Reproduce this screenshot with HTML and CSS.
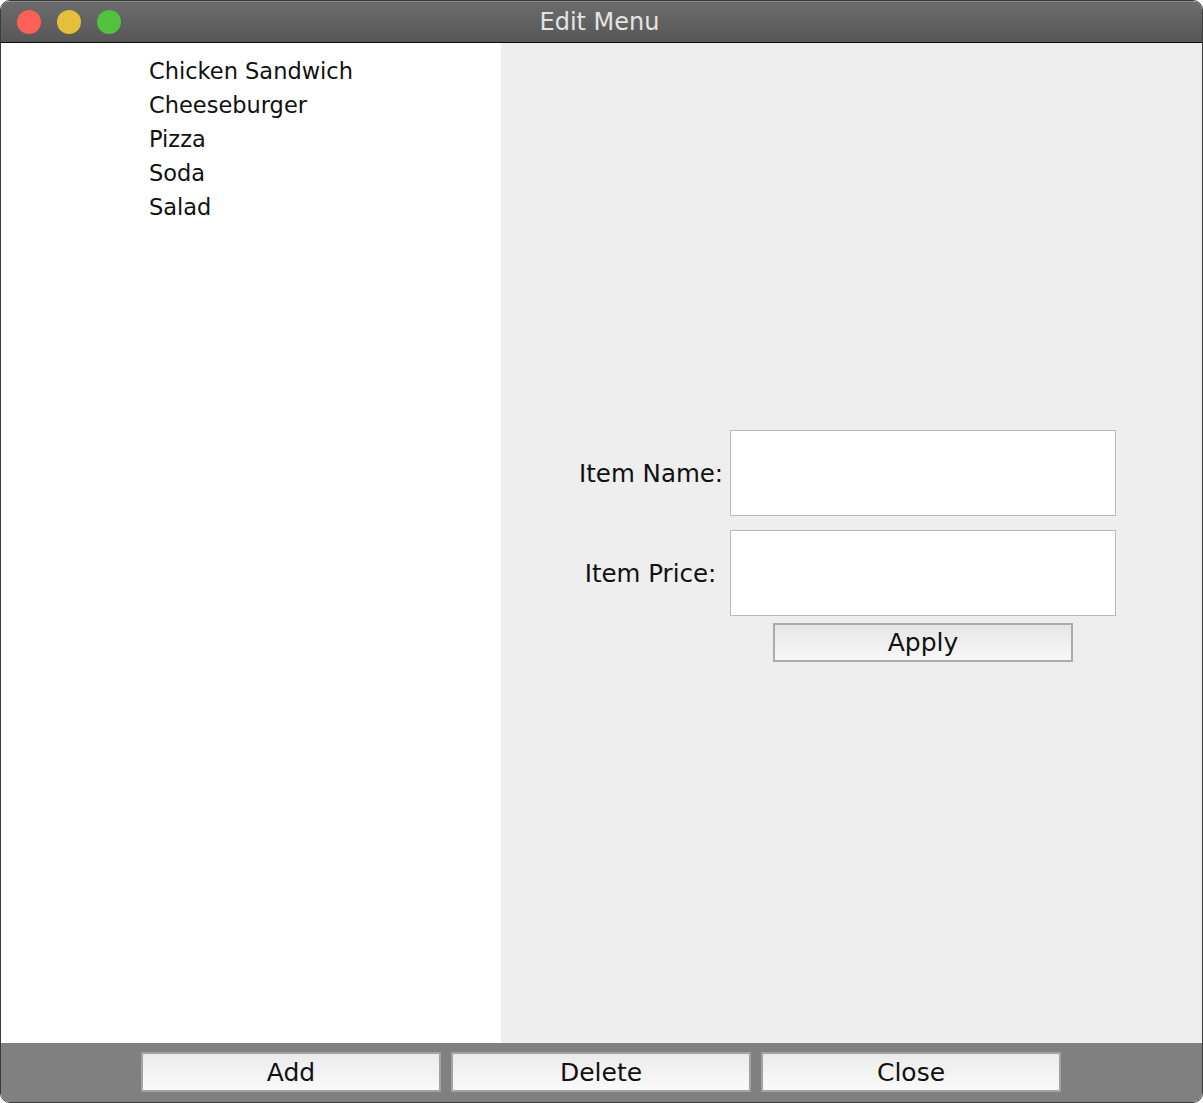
FILE: index.html
```html
<!DOCTYPE html>
<html>
<head>
<meta charset="utf-8">
<title>Edit Menu</title>
<link rel="stylesheet" href="styles.css">
</head>
<body>
<div class="window">
  <div class="titlebar">
    <div class="lights">
      <span class="light red"></span>
      <span class="light yellow"></span>
      <span class="light green"></span>
    </div>
    <div class="title">Edit Menu</div>
  </div>
  <div class="content">
    <div class="list-panel">
      <ul class="menu-list">
        <li>Chicken Sandwich</li>
        <li>Cheeseburger</li>
        <li>Pizza</li>
        <li>Soda</li>
        <li>Salad</li>
      </ul>
    </div>
    <div class="edit-panel">
      <div class="form">
        <label class="label">Item Name:</label>
        <div class="field"></div>
        <label class="label">Item Price:</label>
        <div class="field"></div>
        <div class="spacer"></div>
        <div class="apply-wrap"><button class="btn apply">Apply</button></div>
      </div>
    </div>
  </div>
  <div class="bottombar">
    <button class="btn bar-btn">Add</button>
    <button class="btn bar-btn">Delete</button>
    <button class="btn bar-btn">Close</button>
  </div>
</div>
</body>
</html>
```
FILE: styles.css
```css
* { box-sizing: border-box; }
html, body {
  margin: 0;
  padding: 0;
  background: #ffffff;
}
body {
  font-family: "DejaVu Sans", "Liberation Sans", sans-serif;
  width: 1203px;
  height: 1103px;
  overflow: hidden;
}
.window {
  width: 1203px;
  height: 1103px;
  border: 1px solid #3c3c3c;
  border-radius: 10px;
  overflow: hidden;
  display: flex;
  flex-direction: column;
  background: #eeeeee;
}
.titlebar {
  height: 42px;
  flex: none;
  position: relative;
  background: linear-gradient(#6c6c6c, #575757);
  border-top: 1px solid #8a8a8a;
  border-bottom: 1px solid #0a0a0a;
  display: flex;
  align-items: center;
  justify-content: center;
}
.lights {
  position: absolute;
  left: 16px;
  top: 8px;
  display: flex;
  gap: 16px;
}
.light {
  width: 24px;
  height: 24px;
  border-radius: 50%;
  display: block;
}
.red { background: #fe5f57; }
.yellow { background: #e5bf38; }
.green { background: #50c23c; }
.title {
  color: #e4e4e4;
  font-size: 24px;
  margin-top: -1px;
  margin-left: -4px;
}
.content {
  flex: 1;
  display: flex;
  min-height: 0;
}
.list-panel {
  width: 500px;
  flex: none;
  background: #ffffff;
  padding: 11px 0 0 148px;
}
.menu-list {
  list-style: none;
  margin: 0;
  padding: 0;
  font-size: 22.5px;
  line-height: 34px;
  color: #111;
}
.edit-panel {
  flex: 1;
  background: #eeeeee;
  padding: 387px 0 0 78px;
}
.form {
  display: grid;
  grid-template-columns: 143px 386px;
  column-gap: 8px;
  row-gap: 14px;
}
.label {
  font-size: 24.5px;
  color: #111;
  text-align: center;
  align-self: center;
  white-space: nowrap;
}
.field {
  height: 86px;
  background: #ffffff;
  border: 1px solid #b9b9b9;
}
.apply-wrap {
  display: flex;
  justify-content: center;
  margin-top: -7px;
}
.btn {
  font-family: "DejaVu Sans", "Liberation Sans", sans-serif;
  font-size: 25px;
  color: #111;
  background: linear-gradient(#e6e6e6, #f7f7f7);
  border: 2px solid #ababab;
  padding: 0;
  margin: 0;
}
.apply {
  width: 300px;
  height: 39px;
}
.bottombar {
  height: 59px;
  flex: none;
  background: #808080;
  display: flex;
  gap: 10px;
  padding: 9px 0 0 140px;
}
.bar-btn {
  width: 300px;
  height: 40px;
  border-color: #a2a2a2;
  background: linear-gradient(#ebebeb, #fafafa);
}
```
